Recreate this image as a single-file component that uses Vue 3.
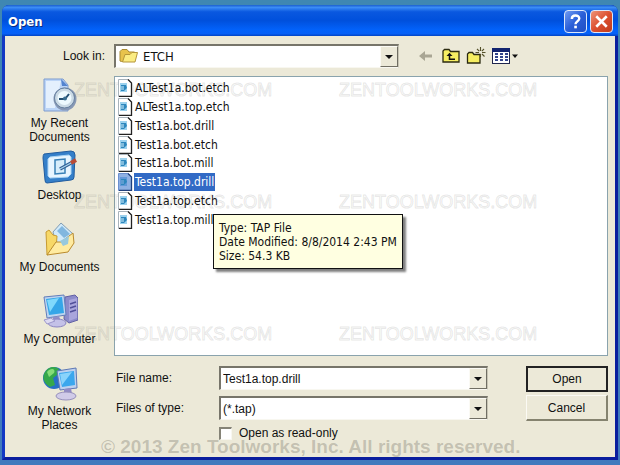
<script setup>
import { ref } from 'vue'

const files = [
  'ALTest1a.bot.etch',
  'ALTest1a.top.etch',
  'Test1a.bot.drill',
  'Test1a.bot.etch',
  'Test1a.bot.mill',
  'Test1a.top.drill',
  'Test1a.top.etch',
  'Test1a.top.mill',
]
const selected = ref('Test1a.top.drill')
const fileName = ref('Test1a.top.drill')
const readOnly = ref(false)

function pick(name) {
  selected.value = name
  fileName.value = name
}
</script>

<template>
  <div class="desktop">
    <main class="dialog">
      <header class="titlebar">
        <h1>Open</h1>
        <button class="cap help" type="button" aria-label="Help">
          <svg viewBox="0 0 20 20"><path d="M6.5 7.5C6.5 3.3 13.6 3.3 13.6 7.2C13.6 9.8 10 9.6 10 12.6" fill="none" stroke="#fff" stroke-width="2.3" /><rect x="8.8" y="14" width="2.5" height="2.5" fill="#fff" /></svg>
        </button>
        <button class="cap close" type="button" aria-label="Close">
          <svg viewBox="0 0 20 20"><path d="M5 5L15 15M15 5L5 15" stroke="#fff" stroke-width="2.5" /></svg>
        </button>
      </header>

      <div class="body">
        <div class="marks" aria-hidden="true">
          <span v-for="n in 6" :key="n">ZENTOOLWORKS.COM</span>
        </div>

        <div class="toolbar">
          <label for="look">Look in:</label>
          <div class="combo look">
            <svg class="folder" viewBox="0 0 20 16"><path d="M1 13V3.5L3 1.5H8L10 4H15.5V13.5H2.5Z" fill="#e8c34c" stroke="#a88a32" /><path d="M3.5 14L6 6.5H11L13 4.5H18.5L16 14Z" fill="#fbec82" stroke="#b5963a" /></svg>
            <select id="look"><option>ETCH</option></select>
            <span class="arrow"></span>
          </div>
          <div class="tools">
            <button type="button" aria-label="Back">
              <svg viewBox="0 0 20 20"><path d="M3 10L9 5V8.5H16V11.5H9V15Z" fill="#a9a694" /></svg>
            </button>
            <button type="button" aria-label="Up one level">
              <svg viewBox="0 0 20 20"><path d="M2 16V5L3.5 3.5H8L9.5 5.5H18V16Z" fill="#f6ee62" stroke="#2b2a10" stroke-width="1.3" /><path d="M14 13.2H8.5V9" fill="none" stroke="#111" stroke-width="1.5" /><path d="M5.5 10L8.5 6.7L11.5 10Z" fill="#111" /></svg>
            </button>
            <button type="button" aria-label="Create new folder">
              <svg viewBox="0 0 20 20"><path d="M1.5 17V8L3 6.5H6.5L8 8.5H14V17Z" fill="#f6ee62" stroke="#2b2a10" stroke-width="1.3" /><path d="M14.5 1V5M14.5 8V11M9.5 6.5H13M16 6.5H19.5M11 3L13.3 5.2M18 3L15.8 5.2M18.5 10.5L16 8" stroke="#55512a" stroke-width="1.1" /></svg>
            </button>
            <button class="views" type="button" aria-label="View menu">
              <svg viewBox="0 0 28 20"><rect x="1.5" y="2.5" width="17" height="15" fill="#fff" stroke="#20264e" /><rect x="1" y="2" width="18" height="4" fill="#13246f" /><path d="M4 8H7M9 8H12M14 8H17M4 11H7M9 11H12M14 11H17M4 14H7M9 14H12M14 14H17" stroke="#34458b" stroke-width="2" /><path d="M21 8.5H27L24 12Z" fill="#111" /></svg>
            </button>
          </div>
        </div>

        <div class="columns">
          <nav class="places">
            <a href="#recent">
              <svg viewBox="0 0 36 36"><path d="M2 2H21L26 8V34H2Z" fill="#bcd5f7" stroke="#7c9bce" /><path d="M4 4H19L13 31H4Z" fill="#e4f0fd" /><path d="M19 2L26 9H20Z" fill="#5484cf" /><circle cx="23" cy="22" r="11.5" fill="#8798b5" /><circle cx="22.500" cy="21" r="10" fill="#cbdae5" stroke="#66809f" /><circle cx="22.500" cy="21" r="7" fill="#eefaff" /><path d="M17 22H23L27 17" fill="none" stroke="#234f73" stroke-width="2" /><circle cx="23" cy="21.500" r="2" fill="#3a6f91" /></svg>
              <span>My Recent<br>Documents</span>
            </a>
            <a href="#desktop">
              <svg viewBox="0 0 36 36"><path d="M2 5L29 2Q33 2 33 6L32 28Q32 31 29 31L5 34Q3 34 3 31L1 9Q1 6 2 5Z" fill="#347fc9" stroke="#215c9f" /><path d="M8 8L27 6L29 8V25L26 28L8 29L6 27V10Z" fill="#e7f5ff" stroke="#aad5f5" /><path d="M13 11L23 10V24L13 25Z" fill="#d6edfb" stroke="#3880b7" stroke-width="1.500" /><path d="M18 20L29 14" stroke="#335e95" stroke-width="3.500" /><path d="M18 20L29 14" stroke="#a9d7ed" stroke-width="1.200" /><path d="M29 14L34 11" stroke="#b84b36" stroke-width="4" /></svg>
              <span>Desktop</span>
            </a>
            <a href="#documents">
              <svg viewBox="0 0 36 36"><path d="M11 11L19 2L31 13L28 27L16 29Z" fill="#d1eafa" stroke="#819db4" /><path d="M15 10L20 5L28 13L22 17Z" fill="#81b7df" /><path d="M4 11L7 9L11 14L15 15L14 29L5 34Z" fill="#f7d867" stroke="#c79b32" /><path d="M5 34L14 21L19 21L31 12L32 22L26 31Z" fill="#ffeba0" stroke="#ba8b2e" /><path d="M18 20L27 15L26 23L21 25Z" fill="#98c9dd" /></svg>
              <span>My Documents</span>
            </a>
            <a href="#computer">
              <svg viewBox="0 0 36 36"><path d="M23 4L33 2L36 5V27L27 30L22 26Z" fill="#8c8bca" stroke="#6261a5" /><path d="M27 7L35 5V25L27 28Z" fill="#a9a5dc" /><path d="M28 11L34 9M28 15L34 13M28 19L34 17" stroke="#514f99" stroke-width="1.500" /><path d="M2 4L22 2L24 22L5 25Z" fill="#bed5f0" stroke="#627dba" /><path d="M4 6L20 4L22 20L7 22Z" fill="#35a6e8" /><path d="M5 7L17 5L8 19Z" fill="#80d9fc" /><path d="M11 24L17 23L19 29H11Z" fill="#9290c8" /><ellipse cx="15" cy="30" rx="9" ry="4" fill="#c4c1e8" stroke="#8a84c1" /><path d="M2 27L9 25L13 28L5 31Z" fill="#dddaf2" stroke="#9c97cc" /></svg>
              <span>My Computer</span>
            </a>
            <a href="#network">
              <svg viewBox="0 0 36 36"><circle cx="12" cy="13" r="11" fill="#276fc6" /><path d="M2 9C5 2 12 0 17 4L15 10L11 13L13 20L8 22C3 19 0 14 2 9Z" fill="#35a84b" /><path d="M5 7C9 2 14 4 12 8L7 12Z" fill="#85dc78" /><path d="M15 6L34 3L35 23L18 25Z" fill="#bdd1ef" stroke="#5e78b4" /><path d="M17 8L32 6L33 20L20 22Z" fill="#3ba7ed" /><path d="M18 9L30 7L20 20Z" fill="#89d3fb" /><path d="M22 24L29 23L30 29H22Z" fill="#918bc5" /><ellipse cx="24" cy="31" rx="10" ry="4" fill="#d0cbe8" stroke="#9690bc" /></svg>
              <span>My Network<br>Places</span>
            </a>
          </nav>

          <section class="main">
            <div class="listbox">
              <ul class="files">
                <li v-for="f in files" :key="f">
                  <button type="button" :class="{ on: f === selected }" @click="pick(f)">
                    <svg viewBox="0 0 16 18"><path class="sheet" d="M1.500 0.500H11L14.500 4V17.500H1.500Z" fill="#fff" stroke="#a9b3bb" /><path class="edge" d="M11 0.500L14.500 4V17.500H2" fill="none" stroke="#222" stroke-width="1.300" /><path class="pane" d="M3 4H10V13H3Z" fill="#9dd2ee" /><path d="M4 6H9L10 9L7 12H4Z" fill="#2e87bd" /><path class="lines" d="M4 8H7M4 10H7" stroke="#d5f1fc" /></svg>
                    <span>{{ f }}</span>
                  </button>
                </li>
              </ul>
              <div class="tip" role="tooltip">Type: TAP File<br>Date Modified: 8/8/2014 2:43 PM<br>Size: 54.3 KB</div>
            </div>

            <form class="form" @submit.prevent>
              <div class="fields">
                <label for="name">File name:</label>
                <div class="combo">
                  <input id="name" v-model="fileName" type="text">
                  <button class="arrow" type="button" aria-label="Recent file names"></button>
                </div>
                <label for="type">Files of type:</label>
                <div class="combo">
                  <select id="type"><option>(*.tap)</option></select>
                  <span class="arrow"></span>
                </div>
                <label class="check"><input v-model="readOnly" type="checkbox">Open as read-only</label>
              </div>
              <div class="actions">
                <button class="push default" type="submit">Open</button>
                <button class="push" type="button">Cancel</button>
              </div>
            </form>
          </section>
        </div>
        <p class="copyright">© 2013 Zen Toolworks, Inc. All rights reserved.</p>
      </div>
    </main>
  </div>
</template>

<style>
body {
  margin: 0;
}
</style>

<style scoped>
* {
  box-sizing: border-box;
}
.desktop {
  display: flex;
  min-height: 100vh;
  padding: 5px 2px;
  background: linear-gradient(#3f87b2, #4079bd);
  font: 12px/14px "Liberation Sans", Arial, sans-serif;
  color: #111;
}
button,
input,
select {
  margin: 0;
  padding: 0;
  border: 0;
  border-radius: 0;
  background: none;
  font: inherit;
  color: inherit;
}
.dialog {
  display: flex;
  flex: 1;
  flex-direction: column;
  border: 3px solid #1238c4;
  border-top: 0;
  border-right-color: #0a1e9e;
  border-bottom-color: #0a1e9e;
  border-radius: 7px 7px 0 0;
  background: #1238c4;
}
.titlebar {
  display: flex;
  align-items: center;
  gap: 3px;
  height: 31px;
  margin: 0 -3px;
  padding: 2px 5px 0 6px;
  border-radius: 7px 7px 0 0;
  background: linear-gradient(#1a5fd0 0, #3b8cf5 8%, #0a58e0 22%, #0050dc 50%, #0262fa 80%, #0660f6 92%, #0344c4 100%);
}
h1 {
  flex: 1;
  margin: 0;
  font: bold 13px/16px "DejaVu Sans Condensed", sans-serif;
  color: #fff;
  text-shadow: 1px 1px #0a2a80;
}
.cap {
  width: 23px;
  height: 23px;
  border: 1px solid #dce8fb;
  border-radius: 4px;
}
.cap svg {
  display: block;
  width: 100%;
}
.help {
  background: linear-gradient(135deg, #6f9bf2, #2a5fd8 50%, #1f4fc4);
}
.close {
  background: linear-gradient(135deg, #ee9478, #dc5030 50%, #c03c1c);
}
.body {
  position: relative;
  display: flex;
  flex: 1;
  flex-direction: column;
  padding: 8px 7px 0 0;
  background: #ece9d8;
}
.marks {
  position: absolute;
  z-index: 1;
  top: 44px;
  left: 69px;
  display: grid;
  grid-template-columns: 265px 200px;
  grid-template-rows: 112px 132px 20px;
  font-size: 18px;
  line-height: 20px;
  color: transparent;
  -webkit-text-stroke: 1px rgba(120, 120, 115, 0.18);
  pointer-events: none;
}
.toolbar {
  display: flex;
  align-items: center;
  height: 24px;
}
.toolbar label {
  width: 109px;
  padding-right: 9px;
  text-align: right;
}
.combo {
  position: relative;
  display: flex;
  height: 24px;
  border: 2px solid #77756a;
  border-right: 1px solid #c8c5b4;
  border-bottom: 1px solid #f8f7f0;
  background: #fff;
}
.look {
  flex: 1;
}
.combo select,
.combo input {
  flex: 1;
  min-width: 0;
  padding-left: 2px;
  appearance: none;
  outline: 0;
}
.look select {
  padding-left: 27px;
  font-family: "DejaVu Sans Condensed", sans-serif;
  font-size: 13px;
}
.folder {
  position: absolute;
  top: 2px;
  left: 3px;
  width: 20px;
  height: 16px;
}
.arrow {
  display: grid;
  place-items: center;
  width: 18px;
  border: 1px solid #fbfaf4;
  border-right-color: #706e63;
  border-bottom-color: #706e63;
  background: #ece9d8;
  pointer-events: none;
}
.arrow::before {
  content: "";
  border: 4px solid transparent;
  border-top-color: #111;
  border-bottom: 0;
}
.tools {
  display: flex;
  gap: 5px;
  width: 209px;
  padding-left: 17px;
}
.tools button {
  width: 20px;
  height: 20px;
}
.tools .views {
  width: 28px;
}
.tools svg {
  display: block;
  width: 100%;
}
.columns {
  display: flex;
  flex: 1;
  margin-top: 8px;
}
.places {
  display: flex;
  flex-direction: column;
  gap: 4px;
  width: 109px;
  padding-top: 1px;
}
.places a {
  display: flex;
  flex-direction: column;
  align-items: center;
  gap: 3px;
  min-height: 68px;
  color: inherit;
  text-align: center;
  text-decoration: none;
}
.places svg {
  width: 36px;
  height: 36px;
}
.main {
  display: flex;
  flex: 1;
  flex-direction: column;
}
.listbox {
  position: relative;
  height: 280px;
  padding: 2px;
  border: 1px solid #8aa3ad;
  background: #fff;
}
.files {
  display: grid;
  grid-auto-rows: 1fr;
  height: 150px;
  margin: 0;
  padding: 0;
  list-style: none;
  font-family: "DejaVu Sans Condensed", sans-serif;
}
.files li {
  display: flex;
}
.files button {
  position: relative;
  z-index: 2;
  display: flex;
  align-items: center;
  gap: 1px;
}
.files svg {
  width: 16px;
  height: 18px;
}
.files span {
  padding: 2px 1px;
}
.on span {
  background: #316ac5;
  color: #fff;
}
.on .sheet {
  fill: #8fb0e2;
  stroke: #6a8fd0;
}
.on .edge {
  stroke: #1f3f7d;
}
.on .pane {
  fill: #6298d8;
}
.on .lines {
  stroke: #8fb0e2;
}
.tip {
  position: absolute;
  z-index: 3;
  top: 137px;
  left: 98px;
  padding: 6px 5px 5px;
  border: 1px solid #111;
  background: #ffffe1;
  box-shadow: 3px 3px 2px rgba(0, 0, 0, 0.5);
  font-family: "DejaVu Sans Condensed", sans-serif;
  white-space: nowrap;
}
.form {
  display: flex;
  gap: 38px;
  padding-top: 10px;
}
.fields {
  display: grid;
  flex: 1;
  grid-template-columns: 103px 1fr;
  grid-template-rows: 24px 24px 14px;
  row-gap: 6px;
  align-items: center;
  padding-left: 2px;
}
.check {
  display: flex;
  grid-column: 2;
  align-items: center;
  gap: 7px;
}
.check input {
  width: 13px;
  height: 13px;
  border: 2px solid #858377;
  border-right: 1px solid #f8f7f0;
  border-bottom: 1px solid #f8f7f0;
  background: #fff;
  appearance: none;
}
.check input:checked {
  background: #316ac5;
}
.actions {
  display: flex;
  flex-direction: column;
  gap: 3px;
  width: 82px;
}
.push {
  height: 26px;
  border: 1px solid #fbfaf4;
  border-right: 2px solid #85836f;
  border-bottom: 2px solid #85836f;
  background: #ece9d8;
}
.default {
  border: 2px solid #222;
}
.copyright {
  position: absolute;
  bottom: 0;
  left: 96px;
  margin: 0;
  font-size: 19px;
  font-weight: bold;
  line-height: 20px;
  color: rgba(110, 108, 95, 0.32);
  white-space: nowrap;
  pointer-events: none;
}
</style>
